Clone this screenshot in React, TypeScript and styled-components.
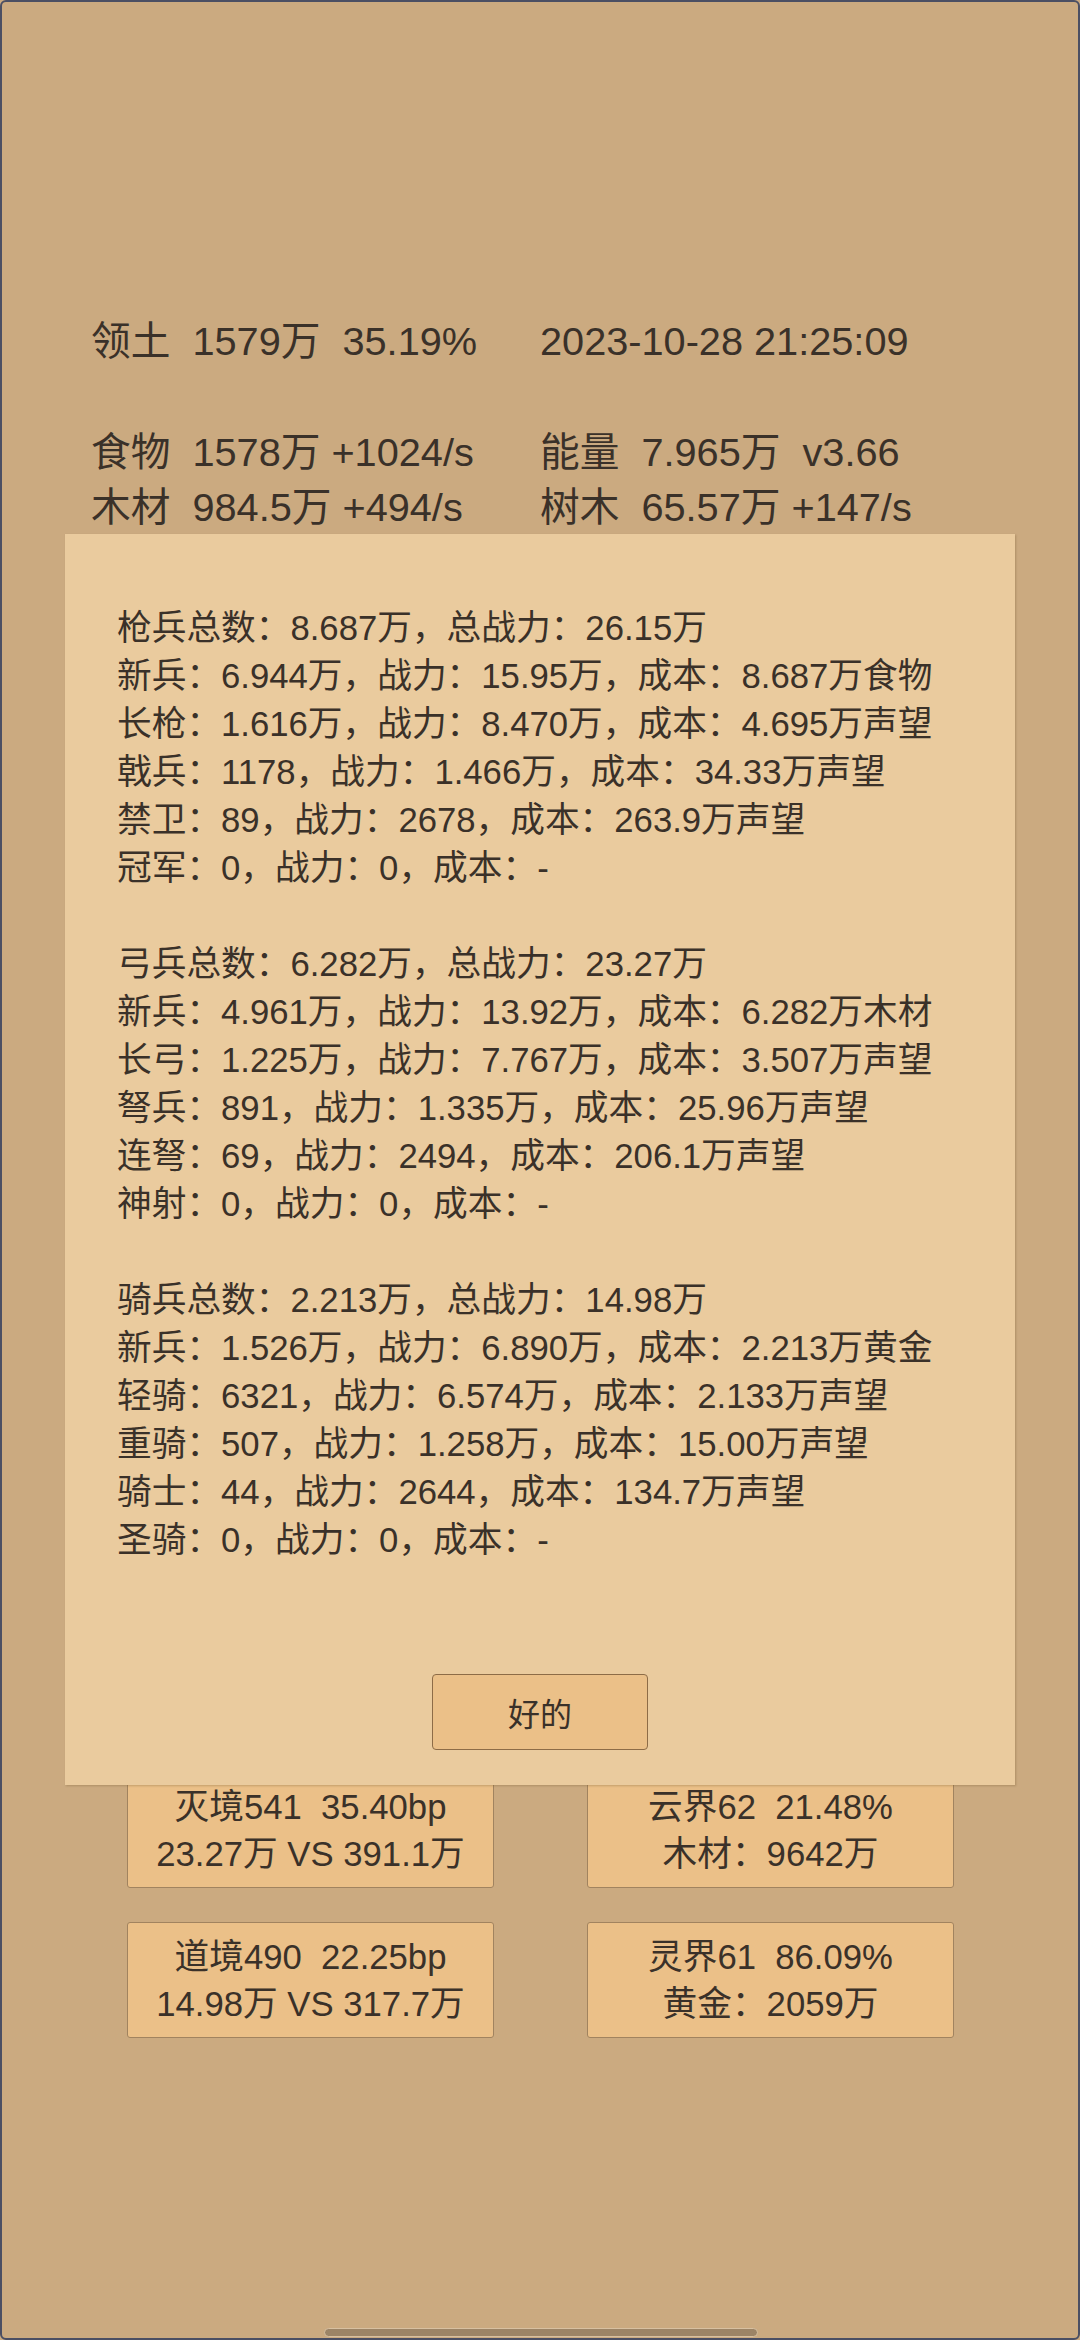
import React from 'react';
import styled, { createGlobalStyle } from 'styled-components';

const GlobalStyle = createGlobalStyle`
  html, body {
    margin: 0;
    padding: 0;
    background: #cbaa80;
  }
  * {
    box-sizing: border-box;
  }
`;

const Screen = styled.div`
  position: relative;
  width: 1080px;
  height: 2340px;
  background: #cbaa80;
  border: 2px solid #4b4f63;
  border-radius: 6px;
  overflow: hidden;
  display: flex;
  flex-direction: column;
  font-family: 'Liberation Sans', 'Noto Sans CJK SC', sans-serif;
  color: #3a3129;
`;

const StatusGrid = styled.div`
  display: grid;
  grid-template-columns: 449px 1fr;
  padding: 312px 0 0 89px;
  font-size: 39.7px;
  line-height: 55px;
  white-space: pre;
`;

const Blank = styled.div`
  height: 56px;
  grid-column: 1 / span 2;
`;

const StatusCell = styled.div``;

const Spacer = styled.div`
  flex: 1;
`;

const CardGrid = styled.div`
  display: grid;
  grid-template-columns: repeat(2, 367px);
  column-gap: 93px;
  row-gap: 34px;
  padding: 0 0 300px 125px;
`;

const Card = styled.div`
  background: #ebc088;
  border: 1px solid #a1835f;
  border-radius: 3px;
  padding: 11px 0 9px;
  text-align: center;
  font-size: 34.7px;
  line-height: 47px;
  white-space: pre;
`;

const Dialog = styled.div`
  position: absolute;
  left: 63px;
  top: 532px;
  width: 950px;
  height: 1251px;
  background: #eacb9e;
  box-shadow: 1px 1px 2px rgba(120, 90, 50, 0.35);
  display: flex;
  flex-direction: column;
  padding: 70px 20px 35px 52px;
`;

const ReportText = styled.div`
  font-size: 34.7px;
  line-height: 48px;
  white-space: pre;
  flex: 1;
`;

const ButtonRow = styled.div`
  display: flex;
  justify-content: center;
  margin-left: -32px;
`;

const OkButton = styled.button`
  width: 216px;
  height: 76px;
  background: #ebc088;
  border: 1px solid #8d6c47;
  border-radius: 4px;
  font-family: 'Noto Sans CJK SC', sans-serif;
  font-size: 32px;
  color: #3a3129;
  padding: 0;
`;

const NavHandle = styled.div`
  position: absolute;
  left: 322px;
  bottom: 1px;
  width: 434px;
  height: 9px;
  border-radius: 5px;
  background: #9c8466;
  border: 1px solid #d8c0a0;
`;

const report = [
  '枪兵总数：8.687万，总战力：26.15万',
  '新兵：6.944万，战力：15.95万，成本：8.687万食物',
  '长枪：1.616万，战力：8.470万，成本：4.695万声望',
  '戟兵：1178，战力：1.466万，成本：34.33万声望',
  '禁卫：89，战力：2678，成本：263.9万声望',
  '冠军：0，战力：0，成本：-',
  '',
  '弓兵总数：6.282万，总战力：23.27万',
  '新兵：4.961万，战力：13.92万，成本：6.282万木材',
  '长弓：1.225万，战力：7.767万，成本：3.507万声望',
  '弩兵：891，战力：1.335万，成本：25.96万声望',
  '连弩：69，战力：2494，成本：206.1万声望',
  '神射：0，战力：0，成本：-',
  '',
  '骑兵总数：2.213万，总战力：14.98万',
  '新兵：1.526万，战力：6.890万，成本：2.213万黄金',
  '轻骑：6321，战力：6.574万，成本：2.133万声望',
  '重骑：507，战力：1.258万，成本：15.00万声望',
  '骑士：44，战力：2644，成本：134.7万声望',
  '圣骑：0，战力：0，成本：-',
].join('\n');

const cards = [
  '灭境541  35.40bp\n23.27万 VS 391.1万',
  '云界62  21.48%\n木材：9642万',
  '道境490  22.25bp\n14.98万 VS 317.7万',
  '灵界61  86.09%\n黄金：2059万',
];

const App: React.FC = () => {
  return (
    <>
      <GlobalStyle />
      <Screen>
        <StatusGrid>
          <StatusCell>领土  1579万  35.19%</StatusCell>
          <StatusCell>2023-10-28 21:25:09</StatusCell>
          <Blank />
          <StatusCell>食物  1578万 +1024/s</StatusCell>
          <StatusCell>能量  7.965万  v3.66</StatusCell>
          <StatusCell>木材  984.5万 +494/s</StatusCell>
          <StatusCell>树木  65.57万 +147/s</StatusCell>
        </StatusGrid>

        <Spacer />

        <CardGrid>
          {cards.map((c) => (
            <Card key={c}>{c}</Card>
          ))}
        </CardGrid>

        <Dialog>
          <ReportText>{report}</ReportText>
          <ButtonRow>
            <OkButton>好的</OkButton>
          </ButtonRow>
        </Dialog>

        <NavHandle />
      </Screen>
    </>
  );
};

export default App;
